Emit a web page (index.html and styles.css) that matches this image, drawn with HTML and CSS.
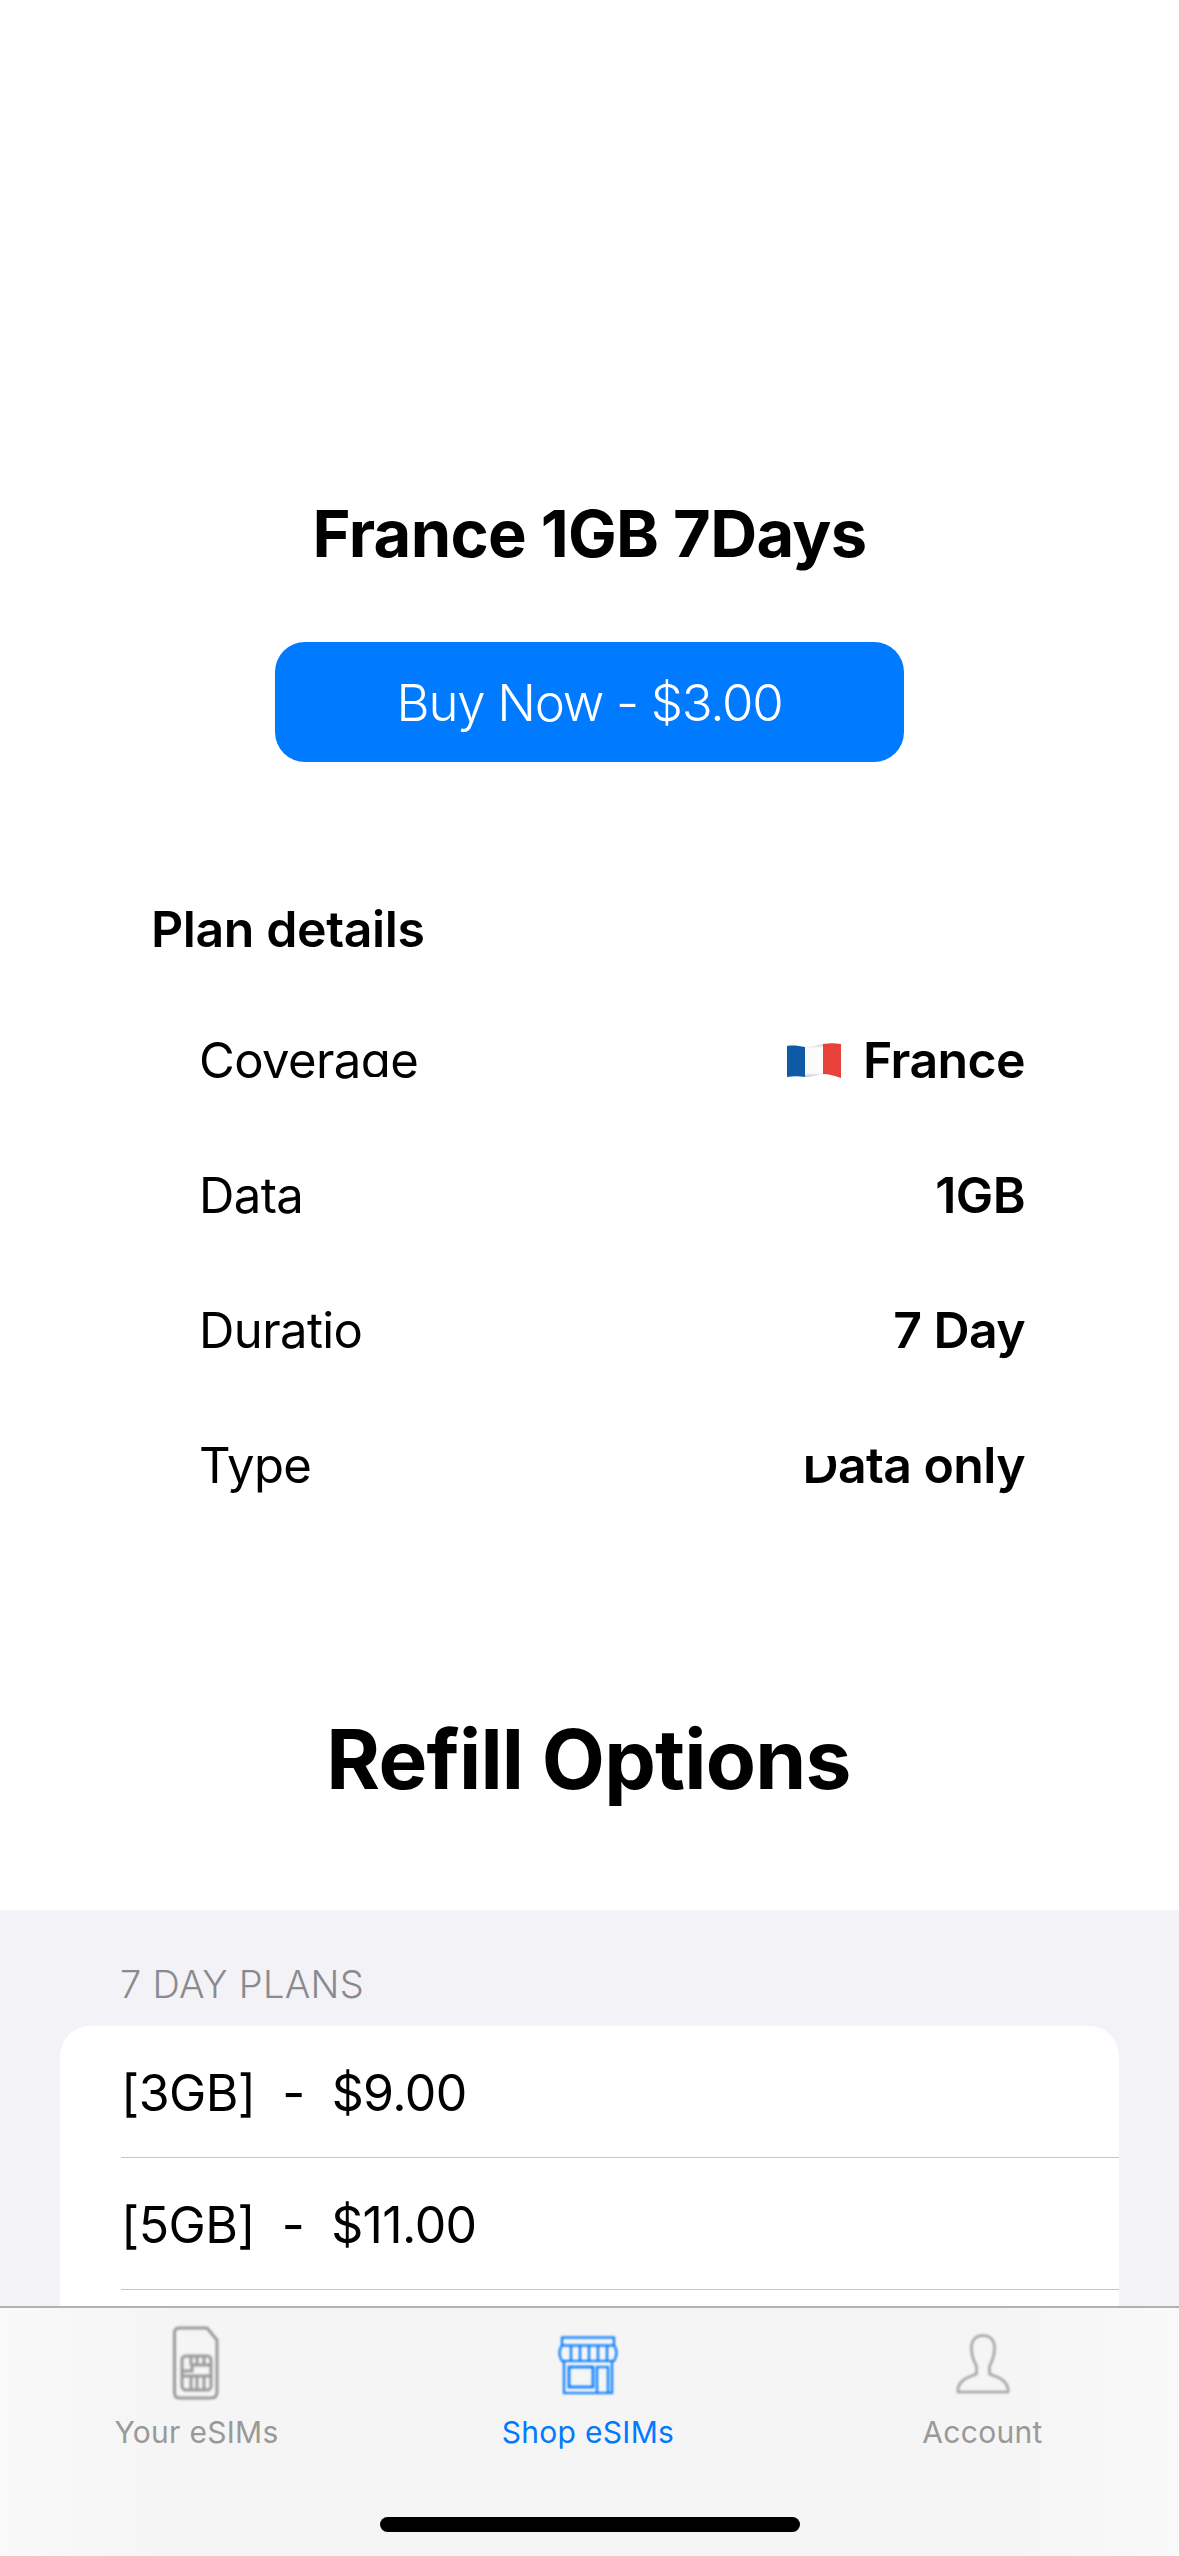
FILE: index.html
```html
<!DOCTYPE html>
<html lang="en">
<head>
    <meta charset="UTF-8">
    <meta name="viewport" content="width=device-width, initial-scale=1.0">
    <title>France 1GB 7Days</title>
    <link rel="stylesheet" href="styles.css">
</head>
<body>

    <div class="screen">
        <div class="top">
            <h1 class="plan-title">France 1GB 7Days</h1>
            <button class="buy-button">Buy Now - $3.00</button>

            <h2 class="details-heading">Plan details</h2>
            <div class="details">
                <div class="detail-row">
                    <span class="detail-label clip-coverage">Coverage</span>
                    <span class="detail-value">
                        <svg class="flag" viewBox="0 0 54 35">
                            <defs>
                                <linearGradient id="flag-white" x1="0" y1="0" x2="0" y2="1">
                                    <stop offset="0" stop-color="#c9c9c9"/>
                                    <stop offset="0.12" stop-color="#fbfbfb"/>
                                    <stop offset="0.88" stop-color="#fbfbfb"/>
                                    <stop offset="1" stop-color="#c4c4c4"/>
                                </linearGradient>
                            </defs>
                            <path d="M0 3 C6 2 12 3 18 4 L18 34 C12 33 6 33 0 34 Z" fill="#0f5aa5"/>
                            <path d="M18 4 C24 4 30 2 36 1 L36 31 C30 32 24 34 18 34 Z" fill="url(#flag-white)"/>
                            <path d="M36 1 C42 0 48 0 54 1 L54 35 C48 33 42 31 36 31 Z" fill="#e8413a"/>
                        </svg>
                        France
                    </span>
                </div>
                <div class="detail-row">
                    <span class="detail-label">Data</span>
                    <span class="detail-value">1GB</span>
                </div>
                <div class="detail-row">
                    <span class="detail-label">Duratio</span>
                    <span class="detail-value">7 Day</span>
                </div>
                <div class="detail-row">
                    <span class="detail-label">Type</span>
                    <span class="detail-value clip-type">Data only</span>
                </div>
            </div>

            <h2 class="refill-heading">Refill Options</h2>
        </div>

        <div class="plans">
            <div class="plans-label">7 DAY PLANS</div>
            <div class="plans-card">
                <div class="plan-row">[3GB]&nbsp; - &nbsp;$9.00</div>
                <div class="plan-row">[5GB]&nbsp; - &nbsp;$11.00</div>
                <div class="plan-row"></div>
            </div>
        </div>

        <nav class="tabbar">
            <div class="tab">
                <svg class="tab-icon sim-icon" width="46" height="74" viewBox="0 0 46 74" fill="none" stroke="#999" stroke-width="3">
                    <path d="M6 2 H34 L44 14 V66 Q44 72 38 72 H6 Q1.500 72 1.500 66 V7 Q1.500 2 6 2 Z"/>
                    <rect x="9" y="30" width="29" height="34" rx="4"/>
                    <path d="M9 45 H19 V39 H38 M9 50 H38 M18 30 V39 M24 30 V39 M31 30 V39 M18 50 V64 M24 50 V64 M31 50 V64"/>
                </svg>
                <span class="tab-label">Your eSIMs</span>
            </div>
            <div class="tab active">
                <svg class="tab-icon store-icon" width="60" height="60" viewBox="0 0 60 60" fill="none" stroke="#007aff" stroke-width="2.2">
                    <rect x="4" y="1.5" width="52" height="8"/>
                    <path d="M4 9 Q-1 17 4 25 H56 Q61 17 56 9"/>
                    <path d="M13 9 V25 M22 9 V25 M31 9 V25 M40 9 V25 M49 9 V25"/>
                    <path d="M6 25 V57 H54 V25"/>
                    <rect x="11" y="31" width="24" height="20" stroke-width="2.6"/>
                    <path d="M39 57 V31 H50 V57"/>
                </svg>
                <span class="tab-label">Shop eSIMs</span>
            </div>
            <div class="tab">
                <svg class="tab-icon account-icon" width="54" height="60" viewBox="0 0 54 60" fill="none" stroke="#a3a3a3" stroke-width="2.5">
                    <path d="M27 1.5 C36 1.5 39 8 38.5 16 C38 25 35 29 33.5 32 V40 C40 43 49 44 52 54 L52 58 H2 L2 54 C5 44 14 43 20.500 40 V32 C19 29 16 25 15.500 16 C15 8 18 1.500 27 1.500 Z"/>
                </svg>
                <span class="tab-label">Account</span>
            </div>
            <div class="home-bar"></div>
        </nav>
    </div>

</body>
</html>
```

FILE: styles.css
```css
/* Phone screen */
html, body {
    margin: 0;
    padding: 0;
    background-color: #ffffff;
}
body {
    font-family: Inter, "Liberation Sans", sans-serif;
    color: #000000;
}
.screen {
    position: relative;
    width: 1179px;
    height: 2556px;
    overflow: hidden;
    display: flex;
    flex-direction: column;
}

/* Top part, plan summary */
.top {
    height: 1910px;
    flex-shrink: 0;
    box-sizing: border-box;
    padding-top: 496px;
    display: flex;
    flex-direction: column;
    align-items: center;
}
.plan-title {
    margin: 0;
    font-size: 65px;
    line-height: 76px;
    font-weight: 700;
    letter-spacing: -0.7px;
}
.buy-button {
    width: 629px;
    height: 120px;
    margin-top: 70px;
    border: none;
    border-radius: 30px;
    background-color: #007aff;
    color: #ffffff;
    font-family: inherit;
    font-size: 51px;
    font-weight: 300;
    letter-spacing: -1.3px;
}
.details-heading {
    align-self: flex-start;
    margin: 136px 0 0 151px;
    font-size: 50px;
    line-height: 62px;
    font-weight: 600;
    letter-spacing: -0.4px;
}
.details {
    align-self: flex-start;
    width: 825px;
    margin: 69px 0 0 199px;
}
.detail-row {
    height: 135px;
    display: flex;
    justify-content: space-between;
    align-items: flex-start;
    font-size: 50px;
    line-height: 62px;
}
.detail-label {
    padding-top: 1px;
    font-size: 49px;
    font-weight: 400;
    letter-spacing: -0.6px;
}
.detail-value {
    display: flex;
    align-items: center;
    gap: 22px;
    margin-right: -1px;
    font-weight: 600;
    letter-spacing: -0.6px;
}
.flag {
    width: 54px;
    height: 35px;
}
/* glitched glyphs in the source capture */
.clip-coverage {
    clip-path: polygon(0 0, 100% 0, 100% 51px, 190px 51px, 190px 48px, 165px 48px, 165px 51px, 0 51px);
}
.clip-type {
    clip-path: polygon(0 22px, 33px 22px, 33px 0, 100% 0, 100% 100%, 0 100%);
}
.refill-heading {
    margin: 141px 0 0;
    font-size: 82px;
    line-height: 100px;
    font-weight: 700;
    letter-spacing: -0.8px;
    transform: translateX(-1px);
}

/* Grouped list */
.plans {
    flex: 1;
    background-color: #f2f2f7;
    padding: 52px 60px 0;
}
.plans-label {
    padding-left: 60px;
    font-size: 38px;
    line-height: 44px;
    font-weight: 300;
    letter-spacing: 0.3px;
    color: #8a8a8e;
}
.plans-card {
    margin-top: 20px;
    background-color: #ffffff;
    border-radius: 30px;
    padding-left: 61px;
}
.plan-row {
    height: 131px;
    border-bottom: 1px solid #c6c6c8;
    font-size: 50px;
    line-height: 135px;
    font-weight: 400;
    letter-spacing: -0.6px;
}

/* Tab bar over the list */
.tabbar {
    position: absolute;
    left: 0;
    right: 0;
    bottom: 0;
    height: 250px;
    box-sizing: border-box;
    border-top: 2px solid #b2b2b2;
    background: linear-gradient(to right, #f9f9f9, #f5f5f5 15%, #f5f5f5 85%, #f9f9f9);
    display: grid;
    grid-template-columns: repeat(3, 1fr);
}
.tab {
    height: 142px;
    display: flex;
    flex-direction: column;
    align-items: center;
    justify-content: flex-end;
    gap: 15px;
    color: #999999;
}
.tab.active {
    color: #007aff;
    padding-right: 3px;
}
.tab-icon {
    filter: blur(0.8px);
}
.sim-icon {
    margin-bottom: -1px;
    margin-right: 1px;
}
.store-icon {
    margin-bottom: 3px;
}
.account-icon {
    margin-bottom: 5px;
}
.tab-label {
    font-size: 30px;
    line-height: 36px;
    font-weight: 400;
    letter-spacing: 0.3px;
}
.home-bar {
    position: absolute;
    left: 380px;
    bottom: 24px;
    width: 420px;
    height: 15px;
    border-radius: 8px;
    background-color: #000000;
}
```
